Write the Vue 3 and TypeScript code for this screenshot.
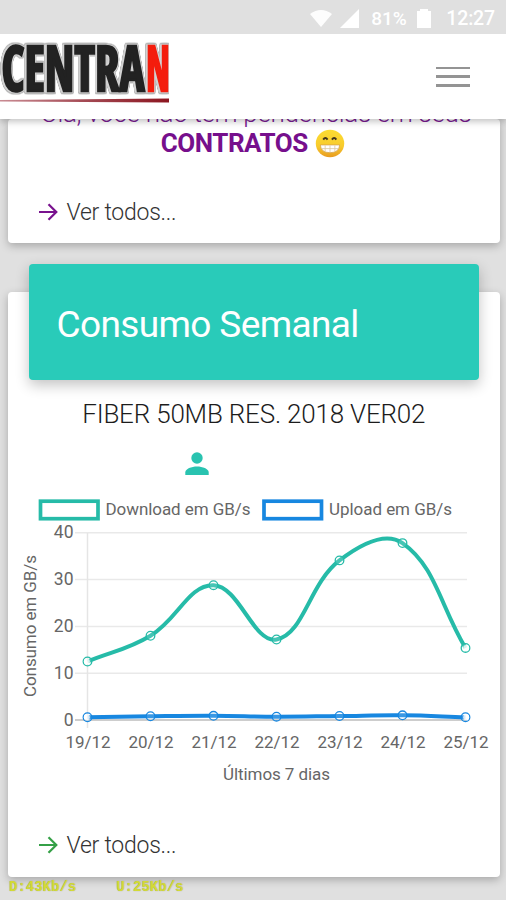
<script setup lang="ts">
interface Point { x: number; y: number }

const labels = ['19/12', '20/12', '21/12', '22/12', '23/12', '24/12', '25/12']
const ticks = [40, 30, 20, 10, 0]
const download = [12.5, 18, 28.8, 17.2, 34.1, 37.8, 15.4]
const upload = [0.6, 0.8, 0.9, 0.7, 0.85, 1, 0.6]

const xAt = (i: number): number => 79.5 + i * 63
const yAt = (v: number): number => 230 - v * 4.68
const toPoints = (values: number[]): Point[] => values.map((v, i) => ({ x: xAt(i), y: yAt(v) }))

function curve(points: Point[]): string {
  const tension = 0.4
  const controls = points.map((p, i) => {
    const prev = points[i - 1] ?? p
    const next = points[i + 1] ?? p
    const before = Math.hypot(p.x - prev.x, p.y - prev.y)
    const after = Math.hypot(next.x - p.x, next.y - p.y)
    const total = before + after
    const a = (tension * before) / total
    const b = (tension * after) / total
    return {
      inX: p.x - a * (next.x - prev.x),
      inY: p.y - a * (next.y - prev.y),
      outX: p.x + b * (next.x - prev.x),
      outY: Math.max(yAt(40), p.y + b * (next.y - prev.y)),
    }
  })
  let d = `M${points[0].x} ${points[0].y}`
  for (let i = 1; i < points.length; i++) {
    const from = controls[i - 1]
    const to = controls[i]
    d += `C${from.outX} ${from.outY} ${to.inX} ${to.inY} ${points[i].x} ${points[i].y}`
  }
  return d
}

const series = [
  { name: 'upload', color: '#1787e0', points: toPoints(upload) },
  { name: 'download', color: '#26bba8', points: toPoints(download) },
]
</script>

<template>
  <div class="screen">
    <div class="status">
      <svg class="wifi" width="22" height="17" viewBox="0 0 22 17"><path d="M0 4Q11-4 22 4L11 17Z" fill="#fff" /></svg>
      <svg class="signal" width="19" height="19" viewBox="0 0 19 19"><path d="M19 0V19H0Z" fill="#fff" /></svg>
      <span class="percent">81%</span>
      <svg class="battery" width="14" height="19" viewBox="0 0 14 19"><path d="M3 2V0H11V2H14V19H0V2Z" fill="#fff" /></svg>
      <span class="clock">12:27</span>
    </div>

    <header class="navbar">
      <svg class="logo" width="169" height="62" viewBox="0 0 169 62">
        <defs>
          <linearGradient id="rule" x1="0" x2="1">
            <stop offset="0" stop-color="#c98b93" />
            <stop offset="0.55" stop-color="#a1444e" />
            <stop offset="1" stop-color="#8c1620" />
          </linearGradient>
        </defs>
        <g class="brand" transform="translate(0 50) scale(1 1.24)">
          <text x="1.5" y="0" textLength="143" lengthAdjust="spacingAndGlyphs">CENTRA</text>
          <text class="red" x="146" y="0" textLength="24" lengthAdjust="spacingAndGlyphs">N</text>
        </g>
        <path d="M0 59L169 57.5V61.5L0 60.5Z" fill="url(#rule)" />
      </svg>
      <button class="menu" aria-label="Menu"><i></i><i></i><i></i></button>
    </header>

    <main>
      <section class="card contracts">
        <p class="notice">
          <span class="line">Olá, você não tem pendências em seus</span>
          <span class="line second">
            <b>CONTRATOS</b>
            <svg width="30" height="29" viewBox="0 0 31 30">
              <defs>
                <linearGradient id="face" x2="0" y2="1">
                  <stop offset="0" stop-color="#fbdc32" />
                  <stop offset="0.6" stop-color="#f8cb2c" />
                  <stop offset="1" stop-color="#e79a20" />
                </linearGradient>
              </defs>
              <ellipse cx="15.5" cy="15" rx="14.7" ry="14.2" fill="url(#face)" />
              <path d="M8.5 11Q10.7 7.8 13 11M17.5 11Q19.8 7.8 22 11" fill="none" stroke="#40351c" stroke-width="2" />
              <path d="M5.5 16.5H25.5Q25 24.5 15.5 24.5T5.5 16.5Z" fill="#fff" stroke="#d8a34a" stroke-width=".8" />
              <path d="M6 20.3H25M10.5 17V23.4M15.5 17V24M20.5 17V23.4" stroke="#d9c39b" stroke-width=".8" />
            </svg>
          </span>
        </p>
        <a class="more purple">
          <svg width="19" height="18" viewBox="0 0 19 18"><path d="M0 9H17M9.5 1.2L17.3 9L9.5 16.8" /></svg>
          <span>Ver todos...</span>
        </a>
      </section>

      <section class="card usage">
        <div class="banner"><h2>Consumo Semanal</h2></div>
        <h3>FIBER 50MB RES. 2018 VER02</h3>
        <svg class="person" width="24" height="24" viewBox="0 0 24 24"><circle cx="12" cy="6" r="5.7" /><path d="M.3 23V20.5C.3 16.8 6.5 14.6 12 14.6S23.7 16.8 23.7 20.5V23Z" /></svg>

        <svg class="chart" width="492" height="300" viewBox="0 0 492 300">
          <rect x="32.5" y="11.2" width="57.5" height="17.5" fill="none" stroke="#26bba8" stroke-width="3.7" />
          <text x="97.5" y="25" textLength="145">Download em GB/s</text>
          <rect x="256" y="11.2" width="57.5" height="17.5" fill="none" stroke="#1787e0" stroke-width="3.7" />
          <text x="321" y="25" textLength="123">Upload em GB/s</text>

          <g v-for="t in ticks" :key="t">
            <path :d="`M67 ${yAt(t)}H459`" :stroke="t === 0 ? '#bcbcbc' : '#e9e9e9'" stroke-width="1.5" />
            <text class="tick" x="65.5" :y="yAt(t) + 5.5" text-anchor="end">{{ t }}</text>
          </g>
          <path d="M79.5 43V238" stroke="#e5e5e5" stroke-width="1.5" />

          <g v-for="s in series" :key="s.name">
            <path :d="curve(s.points)" fill="none" :stroke="s.color" stroke-width="4" />
            <circle v-for="(p, i) in s.points" :key="i" :cx="p.x" :cy="p.y" r="4.3" fill="#fff" fill-opacity=".15" :stroke="s.color" stroke-width="1.3" />
            <circle :cx="s.points[0].x - 0.7" :cy="s.points[0].y" r="3" fill="#fff" fill-opacity=".8" />
            <circle :cx="s.points[6].x + 0.7" :cy="s.points[6].y" r="3" fill="#fff" fill-opacity=".8" />
          </g>

          <text v-for="(label, i) in labels" :key="label" :x="xAt(i) - 22" y="257.5" textLength="45">{{ label }}</text>
          <text x="215" y="289.5" textLength="107">Últimos 7 dias</text>
          <text transform="translate(27.5 207) rotate(-90)" textLength="142">Consumo em GB/s</text>
        </svg>

        <a class="more green">
          <svg width="19" height="18" viewBox="0 0 19 18"><path d="M0 9H17M9.5 1.2L17.3 9L9.5 16.8" /></svg>
          <span>Ver todos...</span>
        </a>
      </section>
    </main>

    <footer class="speed"><span>D:43Kb/s</span><span>U:25Kb/s</span></footer>
  </div>
</template>

<style>
body { margin: 0; overflow: hidden; }
</style>

<style scoped>
* { box-sizing: border-box; }
.screen { width: 506px; height: 900px; overflow: hidden; display: flex; flex-direction: column; background: #e0e0e0; font-family: Roboto, sans-serif; }
.status { flex: none; height: 34px; display: flex; align-items: center; justify-content: flex-end; padding: 3px 11px 0 0; color: #fff; background: #e0e0e0; font-size: 19px; z-index: 3; }
.wifi { margin-right: 8px; opacity: .95; }
.signal { margin-right: 12px; }
.percent { width: 37px; white-space: nowrap; margin-right: 9px; font-size: 19px; font-weight: 500; letter-spacing: -.1px; }
.battery { margin-right: 15px; }
.clock { font-size: 19.5px; font-weight: 500; letter-spacing: -.15px; }
.navbar { flex: none; position: relative; z-index: 2; height: 85px; display: flex; justify-content: space-between; align-items: flex-start; padding: 7px 36px 0 0; background: #fff; box-shadow: 0 3px 6px rgba(0, 0, 0, .22); }
.brand { font: bold 50px "Open Sans", sans-serif; font-stretch: condensed; fill: #222; stroke: #222; stroke-width: 2; filter: drop-shadow(1.2px 0 0 #d2d2d2) drop-shadow(-1.2px 0 0 #d2d2d2) drop-shadow(0 1px 0 #c4c4c4) drop-shadow(0 -1px 0 #c4c4c4) drop-shadow(0 0 .6px #666); }
.red { fill: #f41d0d; stroke: #f41d0d; }
.menu { width: 34px; height: 20px; margin-top: 25.5px; padding: 0; border: 0; background: none; display: flex; flex-direction: column; justify-content: space-between; }
.menu i { height: 2.6px; width: 100%; background: #949494; }
main { flex: none; height: 758px; padding: 0 6px 0 7.5px; display: flex; flex-direction: column; gap: 49px; }
.card { background: #fff; border-radius: 4px; box-shadow: 0 3px 8px rgba(0, 0, 0, .25); display: flex; flex-direction: column; }
.contracts { flex: none; height: 124px; padding: 0 31px; }
.notice { margin: -21px 0 0; height: 99px; text-align: center; color: #7a1c93; font-size: 26px; font-weight: 300; white-space: nowrap; }
.line { display: flex; justify-content: center; height: 30px; line-height: 30px; letter-spacing: -.33px; margin-left: 4px; }
.second { gap: 7px; margin: 0 0 0 -2px; }
.second svg { margin-top: 1px; }
b { color: #760f8c; font-weight: 700; font-size: 26px; letter-spacing: -.5px; }
.more { display: flex; align-items: center; gap: 9px; height: 30px; color: #333; font-size: 23px; font-weight: 300; letter-spacing: -.25px; }
.more svg { fill: none; stroke-width: 2.2; }
.purple svg { stroke: #79128e; }
.green svg { stroke: #35a047; }
.usage { flex: none; height: 585px; padding: 0 21px; }
.banner { flex: none; height: 116px; margin-top: -28px; padding: 5px 28px 0; display: flex; align-items: center; background: #29cbb9; border-radius: 4px; box-shadow: 0 5px 14px rgba(0, 0, 0, .24); }
h2 { margin: 0; color: #fff; font-size: 37px; font-weight: 400; letter-spacing: -.63px; white-space: nowrap; }
h3 { margin: 17px 0 0; height: 34px; line-height: 34px; text-align: center; color: #1c1c1c; font-size: 26px; font-weight: 300; letter-spacing: -.2px; white-space: nowrap; }
.person { flex: none; margin: 21px 0 0 156px; fill: #29c3b0; }
.chart { flex: none; margin: 14px -21px 0; font-size: 17px; }
.chart text { fill: #666; }
.chart .tick { font-size: 17.5px; }
.usage .more { margin: 40px 10px 0; }
.speed { height: 23px; padding: 1px 0 0 9px; display: flex; gap: 40px; font: bold 14px/18px "Liberation Mono", monospace; color: #d3da35; text-shadow: 0 0 1px #96995c; }
</style>
